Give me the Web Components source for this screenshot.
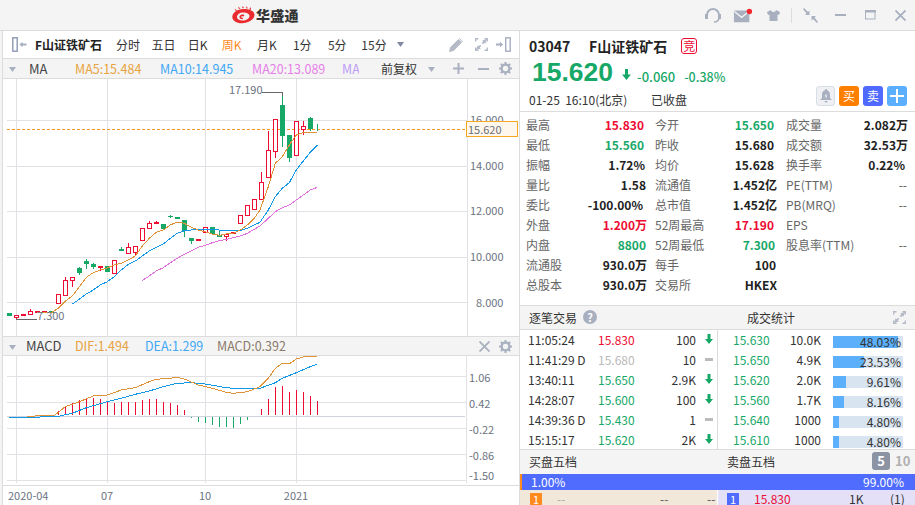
<!DOCTYPE html>
<html lang="zh"><head><meta charset="utf-8"><title>华盛通</title>
<style>
html,body{margin:0;padding:0;background:#f4f4f4;overflow:hidden}
body{width:915px;height:505px;font:12px "Noto Sans CJK SC","Liberation Sans",sans-serif;color:#333}
</style></head><body>
<hs-app>
  <hs-titlebar slot="top"></hs-titlebar>
  <div slot="left" style="display:contents"><hs-toolbar></hs-toolbar><hs-mahead></hs-mahead><hs-kline></hs-kline><hs-macdhead></hs-macdhead><hs-macd></hs-macd></div>
  <div slot="right" style="display:contents"><hs-quote></hs-quote><hs-stats></hs-stats><hs-trades></hs-trades><hs-book></hs-book></div>
</hs-app>
<script>
const FONT='"Noto Sans CJK SC","Liberation Sans",sans-serif';
const RED='#ee0c33',GREEN='#17a868',ICON='#a8b0bf';
const GEAR=(c,s)=>`<svg width="${s}" height="${s}" viewBox="0 0 14 14"><circle cx="7" cy="7" r="4.2" fill="none" stroke="${c}" stroke-width="2.6"/><g stroke="${c}" stroke-width="2.2"><path d="M7 0v2.4M7 11.6V14M0 7h2.4M11.6 7H14M2 2l1.7 1.7M10.3 10.3 12 12M12 2l-1.7 1.7M3.7 10.3 2 12"/></g></svg>`;
const EXPAND=(c)=>`<svg width="13" height="13" viewBox="0 0 13 13" fill="none" stroke="${c}" stroke-width="1.4"><path d="M.7 3.5V.7h2.8M9.5.7h2.8v2.8M12.3 9.5v2.8H9.5M3.5 12.3H.7V9.5"/><path fill="${c}" stroke="none" d="M12 1 7.2 2.6l1 1-1.5 1.5 1.2 1.2 1.5-1.5 1 1zM1 12l4.800-1.600-1-1 1.500-1.500-1.200-1.200-1.500 1.500-1-1z"/></svg>`;
const CARET=(c)=>`<svg width="7" height="5" viewBox="0 0 7 5"><path d="M0 0h7L3.500 5z" fill="${c}"/></svg>`;
const def=(n,css,html)=>customElements.define(n,class extends HTMLElement{constructor(){super();this.attachShadow({mode:'open'}).innerHTML=`<style>${css}</style>${typeof html==='function'?html():html}`}});

def('hs-app',`:host{display:flex;flex-direction:column;width:915px;height:505px;overflow:hidden;background:#f4f4f4}
.top{height:30px;flex:none;border-bottom:1px solid #dcdcdc}
.main{display:flex;height:474px;flex:none}
.left{margin-left:2px;width:516px;border-left:1px solid #dcdcdc;display:flex;flex-direction:column;background:#fff}
.right{width:395px;border-left:1px solid #dcdcdc;margin-left:0;display:flex;flex-direction:column;background:#fff;overflow:hidden}`,
`<div class="top"><slot name="top"></slot></div><div class="main"><div class="left"><slot name="left"></slot></div><div class="right"><slot name="right"></slot></div></div>`);

def('hs-titlebar',`:host{display:flex;height:30px;align-items:center;position:relative}
.logo{display:flex;align-items:center;margin-left:232px;width:70px;gap:1px}
.logo b{font-size:14px;font-weight:900;color:#333;letter-spacing:.3px;white-space:nowrap}
.ic{position:absolute;top:0;height:30px;display:flex;align-items:center;justify-content:center;width:20px}
.sep{position:absolute;left:791px;top:8px;width:1px;height:15px;background:#dcdcdc}`,
`<div class="logo"><svg width="23" height="18" viewBox="0 0 23 18"><g fill="#ea2a2e"><path d="M7 3 6 .5 8.500 2.500zM10.500 2.300 10.300 0l2 2zM14 2.200 14.800 0l.9 2.600zM17 3.300 19 1l-.2 3zM3.800 5 2.500 2.800l2.800 1.400z"/><path fill-rule="evenodd" d="M11.500 3C5 3 .3 7 .3 11c0 3.700 4.200 6.300 9.500 6.300 6.500 0 12.700-3.600 12.700-8.500C22.500 5 17.500 3 11.500 3zM11 6.500c3.800 0 6.500 1.300 6.500 3.500 0 2.600-3.400 4.500-7 4.500-3.200 0-5.500-1.400-5.500-3.400C5 8.500 7.700 6.500 11 6.500z"/><path d="M7.500 10.300c.6-1.500 3.200-2.200 5-1.300l-.9 1.400c-1.300-.4-2.400-.2-2.900.6.5.7 1.500 1 2.500.7l-.6 1.600c-1.800.2-3.600-1-3.100-3z"/></g></svg><b>华盛通</b></div>
<span class="ic" style="left:703px"><svg width="18" height="17" viewBox="0 0 18 17" fill="none" stroke="${ICON}" stroke-width="2"><path d="M3 10V8a6 6 0 0 1 12 0v2"/><path d="M15 10c0 3-2 5-5 5" stroke-width="1.500"/><rect x="1.500" y="7.500" width="2" height="4" fill="${ICON}" stroke-width="1"/><rect x="14.500" y="7.500" width="2" height="4" fill="${ICON}" stroke-width="1"/></svg></span>
<span class="ic" style="left:733px"><svg width="22" height="17" viewBox="0 0 22 17"><rect x="1" y="3" width="17" height="13" rx="1" fill="${ICON}"/><path d="M1.500 4 9.500 10.500 17.500 4" fill="none" stroke="#f4f4f4" stroke-width="1.400"/><circle cx="18" cy="4" r="3" fill="#f5282e"/></svg></span>
<span class="ic" style="left:763px"><svg width="13" height="11" viewBox="0 0 13 11"><path d="M4 0 0 2l1 3 1.500-.5V11h8V4.500L12 5l1-3-4-2a2.500 2 0 0 1-5 0z" fill="${ICON}"/></svg></span>
<span class="sep"></span>
<span class="ic" style="left:800px"><svg width="15" height="15" viewBox="0 0 15 15" fill="${ICON}"><path d="M0 1 1 0l4 4 1.500-1.500V7H2l1.500-1.500zM15 14l-1 1-4-4-1.500 1.500V8H13l-1.500 1.500z"/></svg></span>
<span class="ic" style="left:830px"><svg width="11" height="3"><rect width="11" height="2" y="0" fill="${ICON}"/></svg></span>
<span class="ic" style="left:860px"><svg width="11" height="10" fill="none"><rect x=".5" y=".5" width="9.500" height="8.500" stroke="${ICON}"/><rect x="0" y="0" width="11" height="2.500" fill="${ICON}"/></svg></span>
<span class="ic" style="left:890px"><svg width="11" height="11" stroke="${ICON}" stroke-width="1.800"><path d="m.5.500 10 10M10.500.500l-10 10"/></svg></span>`);

const TABW=[36,35,33.5,34.5,36,34.5,35.5,38];
def('hs-toolbar',`:host{display:flex;height:27px;flex:none;border-bottom:1px solid #dcdcdc;align-items:center;box-sizing:content-box;position:relative;font-size:12px;color:#333;background:#fff}
.coll{margin-left:9px;display:flex}
b{margin-left:8px;width:75px;font-size:12px;white-space:nowrap;color:#222}
i{font-style:normal;text-align:center;white-space:nowrap}
.o{color:#ff8a1e}
.r{position:absolute;top:0;height:27px;display:flex;align-items:center}`,
()=>`<span class="coll"><svg width="15" height="15" viewBox="0 0 15 15"><rect x=".8" y=".8" width="4.400" height="13.400" fill="#fff" stroke="#8d97b3" stroke-width="1.400"/><path d="M7.500 7.500 10.500 4.800V6.500h4v2h-4v1.700z" fill="#a6aebf"/></svg></span><b>F山证铁矿石</b>
${['分时','五日','日K','周K','月K','1分','5分','15分'].map((t,i)=>`<i class="${i==3?'o':''}" style="width:${TABW[i]}px">${t}</i>`).join('')}
<span class="r" style="left:394px">${CARET('#8089a0')}</span>
<span class="r" style="left:446px"><svg width="14" height="14" viewBox="0 0 14 14" fill="#b4bac6"><path d="M0 14l1-4.500L9.500 1l3.500 3.500L4.500 13zM10.500 0 14 3.500l-.5.500L10 .5z"/></svg></span>
<span class="r" style="left:472px">${EXPAND('#b4bac6')}</span>
<span class="r" style="left:493px"><svg width="15" height="15" viewBox="0 0 15 15"><path d="M0 6.500h4V4.800l3 2.700-3 2.700V8.500H0z" fill="#a6aebf"/><rect x="9.700" y=".8" width="4.500" height="13.400" fill="#fff" stroke="#a6aebf" stroke-width="1.400"/></svg></span>`);

const headCss=`:host{display:flex;height:18px;flex:none;border-bottom:1px solid #dcdcdc;background:#f4f4f4;align-items:center;position:relative;font-size:12.500px;white-space:nowrap}
.car{position:absolute;left:6px;top:8px;display:flex}
span.t{position:absolute;top:0;line-height:18px}
.i{position:absolute;display:flex;top:0;height:18px;align-items:center}`;
def('hs-mahead',headCss+`:host{height:19px}.car{top:8px}span.t{line-height:19px}.i{height:19px}`,
`<span class="car">${CARET('#a9b0bf')}</span>
<span class="t" style="left:26px;color:#444;font-size:13px">MA</span>
<span class="t" style="left:72px;color:#e8a33f">MA5:15.484</span>
<span class="t" style="left:157px;color:#42a8f5">MA10:14.945</span>
<span class="t" style="left:249px;color:#e77fe8">MA20:13.089</span>
<span class="t" style="left:339px;color:#bd9cf5;width:17px;overflow:hidden">MA30:0</span>
<span class="t" style="left:378px;color:#333;font-size:12px">前复权</span>
<span class="car" style="left:425px">${CARET('#a9b0bf')}</span>
<span class="i" style="left:450px"><svg width="11" height="11" fill="#a9b0bf"><path d="M4.500 0h2v4.500H11v2H6.500V11h-2V6.500H0v-2h4.500z"/></svg></span>
<span class="i" style="left:475px"><svg width="11" height="2"><rect width="11" height="2" fill="#a9b0bf"/></svg></span>
<span class="i" style="left:496px">${GEAR('#a9b0bf',13)}</span>`);
def('hs-macdhead',headCss+`:host{border-top:1px solid #dcdcdc}`,
`<span class="car">${CARET('#a9b0bf')}</span>
<span class="t" style="left:23px;color:#444;font-size:13px">MACD</span>
<span class="t" style="left:72px;color:#e8a33f">DIF:1.494</span>
<span class="t" style="left:142px;color:#42a8f5">DEA:1.299</span>
<span class="t" style="left:214px;color:#8a7a6a">MACD:0.392</span>
<span class="i" style="left:476px"><svg width="11" height="11" stroke="#a9b0bf" stroke-width="1.800"><path d="m.5.500 10 10M10.500.500l-10 10"/></svg></span>
<span class="i" style="left:496px">${GEAR('#a9b0bf',13)}</span>`);

const X=k=>Math.floor(9.33+7*k)+.5;
const z4=(x,y)=>[x/3,170+y/3], z5=(x,y)=>[260+x/3,90+y/3], z6=(x,y)=>[x/3,335+y/3], z7=(x,y)=>[260+x/3,335+y/3];
const pts=(a,f,b,g)=>[...a.map(p=>f(p[0],p[1])),...b.map(p=>g(p[0],p[1]))].map(p=>p[0].toFixed(1)+','+p[1].toFixed(1)).join(' ');
const C=[['g',430,437],['r',434,445,,448],['f',433,437],['r',424,436,417],['f',424,428],['f',424,428],['g',424,428],['r',373,403],['r',331,377,322],['r',322,334,,350],['g',294,308,291,314],['g',274,282,267,296],['g',282,290,279,296],['f',289,293,,302],['g',289,305],['r',271,313],['g',237,242,232],['r',232,253,220],['r',229,248,,255],['r',175,214],['r',160,178,154],['r',157,163,154],['g',163,177],['g',138,142,136,144],['g',141,146],['g',151,184,,200],['g',205,213,,221],['r',208,214],['r',172,190],['g',172,191],['g',196,200,184],['r',191,202,,212],['r',185,193],['r',136,163],['r',106,139],['r',88,121]];
const conv=y=>170+y/3;
const CP=C.map(c=>[c[0],conv(c[1]),conv(c[2]),c[3]==null?null:conv(c[3]),c[4]==null?null:conv(c[4])]);
CP.push(['r',182,200,172,null],['r',150,178,131,null],['r',119,152,null,158],['g',105,136,92,147],['g',135,158,null,162],['r',121,156,null,null],['r',126,130,121,135],['g',118,129,117,131],['w',124,131,124,131]);
function candle(c,k){const x=X(k),t=Math.round(c[1]),b=Math.round(c[2]);const col=(c[0]=='g'||c[0]=='w')?GREEN:RED;let s='';
 if(c[0]=='w')return `<path d="M${x} ${t}V${b}" stroke="${GREEN}"/>`;
 if(c[3]!=null)s+=`<path d="M${x} ${Math.round(c[3])}V${t}" stroke="${col}"/>`;
 if(c[4]!=null)s+=`<path d="M${x} ${b}V${Math.round(c[4])}" stroke="${col}"/>`;
 if(c[0]=='r')s+=`<rect x="${x-2}" y="${t+.5}" width="4" height="${b-t-1}" fill="#fff" stroke="${col}" stroke-width="1"/>`;
 else s+=`<rect x="${x-2.5}" y="${t}" width="5" height="${b-t}" fill="${col}"/>`;
 return s;}
const MA5=pts([[112,428],[154,428],[175,415],[196,393],[217,378],[238,350],[259,322],[280,308],[301,300],[322,294],[343,285],[364,280],[385,270],[406,258],[427,228],[448,205],[469,187],[490,180],[511,165],[532,156],[553,160],[574,172],[595,180],[616,185],[637,192],[658,196],[679,192],[700,190],[721,180],[742,165],[763,145],[780,120]],z4,[[25,290],[46,220],[67,200],[88,165],[109,135],[130,128],[151,129],[172,126]],z5);
const MA10=pts([[217,402],[238,388],[259,372],[280,360],[301,345],[322,335],[343,320],[364,300],[385,283],[406,273],[427,258],[448,243],[469,232],[490,222],[511,205],[532,190],[553,182],[574,180],[595,178],[616,177],[637,177],[658,180],[679,182],[700,183],[721,182],[742,175],[763,165],[780,157]],z4,[[25,360],[46,320],[67,295],[88,278],[109,240],[130,213],[151,187],[172,165]],z5);
const MA20=pts([[427,331],[448,318],[469,303],[490,293],[511,278],[532,265],[553,253],[574,243],[595,232],[616,226],[637,218],[658,212],[679,208],[700,203],[721,198],[742,190],[763,178],[780,168]],z4,[[25,385],[46,365],[67,353],[88,345],[109,330],[130,315],[151,300],[172,292]],z5);
const svgCss=`:host{display:block;flex:none}svg{display:block}text{font:11px ${FONT};fill:#6b7280}`;
def('hs-kline',svgCss+`:host{height:257px}`,()=>`<svg width="516" height="257" viewBox="3 79 516 257">
<g stroke="#e2e2e6" stroke-width="1" shape-rendering="crispEdges">
${[16,107,205,296].map(x=>`<path d="M${x+.5} 79V336"/>`).join('')}
${[120,166,211,257,302].map(y=>`<path d="M7 ${y+.5}H467"/>`).join('')}
<path d="M467.500 79V336"/></g>
<g text-anchor="start">${[[14,170],[12,215],[10,261],[8,307]].map(([v,y])=>`<text x="${v<10?476:470}" y="${y}">${v}.000</text>`).join('')}</g>
<path d="M7 129.500H466" stroke="#f39a1e" stroke-dasharray="3 2" shape-rendering="crispEdges"/>
<g shape-rendering="crispEdges">${CP.map(candle).join('')}</g>
<g fill="none" stroke-width="1" shape-rendering="crispEdges"><polyline points="${MA20}" stroke="#e070dc"/><polyline points="${MA10}" stroke="#1296e6"/><polyline points="${MA5}" stroke="#e09236"/></g>
<path d="M262 92.500H282.500V96" fill="none" stroke="#666" shape-rendering="crispEdges"/>
<text x="229" y="94">17.190</text>
<path d="M16 319.500H37" stroke="#666" shape-rendering="crispEdges"/>
<text x="37" y="320">7.300</text>
<text x="470" y="124">16.000</text>
<rect x="466.500" y="121.500" width="51" height="15" fill="#fff6ec" stroke="#f5a623"/>
<text x="468" y="133.500" style="fill:#6b6f78">15.620</text></svg>`);
const up=[[7,228],[8,213],[9,205],[10,195],[11,190],[12,190],[13,192],[14,198],[15,203],[16,201],[17,201],[18,201],[19,195],[20,192],[21,192],[22,201],[23,204],[24,210],[25,225],[36,222],[37,192],[38,156],[39,153],[40,170],[41,165],[42,171],[43,183],[44,198]];
const dn=[[26,248],[27,261],[28,264],[29,270],[30,276],[31,276],[32,279],[33,267],[34,256]];
const DIF=pts([[80,244],[130,242],[165,240],[196,215],[238,200],[280,183],[322,180],[364,165],[406,158],[448,140],[469,133],[511,130],[532,127],[553,132],[595,150],[637,160],[679,172],[700,175],[742,170],[780,155]],z6,[[25,130],[46,100],[67,85],[90,85],[109,72],[130,66],[172,64]],z7);
const DEA=pts([[28,246],[120,246],[175,244],[217,235],[259,218],[322,200],[364,190],[406,178],[448,168],[490,155],[532,145],[574,143],[616,147],[679,158],[721,162],[780,160]],z6,[[46,143],[67,130],[109,113],[151,95],[172,88]],z7);
def('hs-macd',svgCss+`:host{height:149px}`,()=>`<svg width="516" height="149" viewBox="3 356 516 149">
<g stroke="#e2e2e6" shape-rendering="crispEdges">
${[16,107,205,296].map(x=>`<path d="M${x+.5} 356V483"/>`).join('')}
${[376,402,428,454,480].map(y=>`<path d="M7 ${y+.5}H467"/>`).join('')}
<path d="M466.500 356V483"/><path d="M3 485.500H519" stroke="#dcdcdc"/></g>
<path d="M7 416.500H465" stroke="#cfd3dc" shape-rendering="crispEdges"/>
<g stroke-width="1" shape-rendering="crispEdges">
${up.map(([k,y])=>`<path d="M${X(k)} ${Math.round(335+y/3)}V415" stroke="${RED}"/>`).join('')}
${dn.map(([k,y])=>`<path d="M${X(k)} 417V${Math.round(335+y/3)}" stroke="${GREEN}"/>`).join('')}
</g>
<g fill="none" shape-rendering="crispEdges"><polyline points="${DEA}" stroke="#1296e6"/><polyline points="${DIF}" stroke="#e09236"/></g>
${[['1.06',382],['0.42',408],['-0.22',434],['-0.86',460],['-1.50',480]].map(([t,y])=>`<text x="469" y="${y}">${t}</text>`).join('')}
<text x="8" y="500">2020-04</text><text x="107" y="500" text-anchor="middle">07</text><text x="205" y="500" text-anchor="middle">10</text><text x="296" y="500" text-anchor="middle">2021</text></svg>`);

def('hs-quote',`:host{display:block;flex:none;height:80px;border-bottom:1px solid #dcdcdc;box-sizing:content-box;position:relative;background:#fff;white-space:nowrap}
.a{display:flex;align-items:center;height:30px;padding-left:9px;font-weight:700;font-size:14px;color:#222}
.a .c{width:60px}
.a em{font:12px ${FONT};font-style:normal;color:#ee0c33;border:1px solid #ee0c33;border-radius:3px;width:14px;height:14px;line-height:14px;text-align:center;margin-left:14px}
.b{display:flex;align-items:center;height:28px;color:${GREEN}}
.p{font:700 26.500px "Liberation Sans",sans-serif;margin-left:12px;line-height:28px;width:87px;position:relative;top:-3px}
.d{font-weight:500;margin-top:3px}
.e{display:flex;align-items:center;height:20px;padding-left:9px;font-size:12px;color:#333}
.btns{position:absolute;left:296px;top:55px;display:flex;gap:4px}
.btns span{width:20px;height:20px;border-radius:3px;color:#fff;font-size:12px;line-height:20px;text-align:center;display:flex;align-items:center;justify-content:center}`,
`<div class="a"><span class="c">03047</span><span>F山证铁矿石</span><em>竞</em></div>
<div class="b"><span class="p">15.620</span><svg style="margin:-1px 0 0 3px" width="9" height="11" viewBox="0 0 9 11"><path d="M3 0h3v5.500h3L4.500 11 0 5.500h3z" fill="${GREEN}"/></svg><span class="d" style="margin-left:6px;font-size:13px">-0.060</span><span class="d" style="margin-left:9px;font-size:12.500px">-0.38%</span></div>
<div class="e"><span style="width:122px">01-25&nbsp; 16:10(北京)</span><span>已收盘</span></div>
<div class="btns"><span style="background:#eef0f3;border:1px solid #d9dde4;box-sizing:border-box;width:19px"><svg width="12" height="14" viewBox="0 0 12 14"><path d="M6 0a1 1 0 0 1 1 1.200C9.300 1.700 10 3.700 10 6v3l2 2H0l2-2V6c0-2.300.7-4.300 3-4.800A1 1 0 0 1 6 0zM4.500 12h3a1.500 1.500 0 0 1-3 0z" fill="#a8b0bf"/><path d="M6.500 4 4.500 7.500H6l-.5 2.500 2-3.500H6z" fill="#eef0f3"/></svg></span><span style="background:#ff8000">买</span><span style="background:#5069ff">卖</span><span style="background:#5caeff"><svg width="14" height="14" fill="#fff"><path d="M6 0h2v6h6v2H8v6H6V8H0V6h6z"/></svg></span></div>`);

const ST=[
['最高','15.830',RED,3,'今开','15.650',GREEN,4,'成交量','2.082万','',0],
['最低','15.560',GREEN,3,'昨收','15.680','',4,'成交额','32.53万','',0],
['振幅','1.72%','',2,'均价','15.628','',4,'换手率','0.22%','',3],
['量比','1.58','',1,'流通值','1.452亿','',1,'PE(TTM)','--','#555',1],
['委比','-100.00%','',4,'总市值','1.452亿','',1,'PB(MRQ)','--','#555',1],
['外盘','1.200万',RED,0,'52周最高','17.190',RED,4,'EPS','','',0],
['内盘','8800',GREEN,1,'52周最低','7.300',GREEN,3,'股息率(TTM)','--','#555',1],
['流通股','930.0万','',0,'每手','100','',2,'','','',0],
['总股本','930.0万','',0,'交易所','HKEX','',1,'','','',0]];
def('hs-stats',`:host{display:grid;flex:none;height:194px;box-sizing:border-box;padding:3px 0 0 6px;border-bottom:1px solid #dcdcdc;background:#fff;
grid-template-columns:121px 131px 130px;grid-auto-rows:20px;font-size:12px;white-space:nowrap}
.c{display:flex;justify-content:space-between;align-items:center;line-height:20px}
.c span{color:#666}.c b{color:#222;font-weight:700}`,
()=>ST.map(r=>[0,4,8].map(o=>`<div class="c" style="padding-left:${o?8:0}px"><span>${r[o]}</span><b style="color:${r[o+2]||'#222'};font-weight:${r[o+2]=='#555'?400:700};padding-right:${r[o+3]}px">${r[o+1]}</b></div>`).join('')).join(''));

const arrow=`<svg width="8" height="10" viewBox="0 0 8 10"><path d="M2.500 0h3v5H8L4 10 0 5h2.500z" fill="${GREEN}"/></svg>`;
const flat=`<svg width="8" height="3"><rect width="8" height="3" fill="#bbb"/></svg>`;
const T=[['11:05:24','15.830',RED,'100',1,'15.630','10.0K','48.03%',65],['11:41:29 D','15.680','#b9b9b9','10',0,'15.650','4.9K','23.53%',31],['13:40:11','15.650',GREEN,'2.9K',1,'15.620','2.0K','9.61%',13],['14:28:07','15.600',GREEN,'100',1,'15.560','1.7K','8.16%',11],['14:39:36 D','15.430',GREEN,'1',0,'15.640','1000','4.80%',6],['15:15:17','15.620',GREEN,'2K',1,'15.610','1000','4.80%',6]];
def('hs-trades',`:host{display:block;flex:none;background:#fff;font-size:12px;white-space:nowrap}
.h{display:flex;align-items:center;height:23px;box-sizing:border-box;padding-bottom:1px;background:#f4f4f4;box-sizing:content-box;height:22px;border-bottom:1px solid #dcdcdc;padding-left:9px;position:relative;color:#333}
.q{width:14px;height:14px;border-radius:50%;background:#a8b0bf;color:#fff;font-size:11px;font-weight:700;line-height:14px;text-align:center;margin-left:6px}
.body{display:flex;height:119px;border-bottom:1px solid #dcdcdc;box-sizing:content-box}
.l{width:197px;border-right:1px solid #dcdcdc;flex:none}.rr{flex:1}
.row{display:flex;align-items:center;height:20px;box-sizing:border-box;padding-bottom:2px}
.l .t{width:70px;margin-left:8px;color:#333}.l .p{width:50px}.l .v{width:48px;text-align:right;color:#333}.l .a{margin-left:9px;display:flex}
.rr .p{width:36px;margin-left:15px;color:${GREEN}}.rr .v{width:52px;text-align:right;color:#333}
.bar{margin-left:12px;width:70px;height:12px;background:#d8e4ef;position:relative;margin-top:6px}
.bar u{display:block;height:12px;background:#5cb0fb}
.bar s{position:absolute;right:2px;top:-4px;line-height:20px;text-decoration:none;color:#333}`,
()=>`<div class="h"><span>逐笔交易</span><span class="q">?</span><span style="position:absolute;left:227px">成交统计</span><span style="position:absolute;left:373px;top:5px;display:flex">${EXPAND('#b4bac6')}</span></div>
<div class="body"><div class="l">${T.map(r=>`<div class="row"><span class="t">${r[0]}</span><span class="p" style="color:${r[2]}">${r[1]}</span><span class="v">${r[3]}</span><span class="a">${r[4]?arrow:flat}</span></div>`).join('')}</div>
<div class="rr">${T.map(r=>`<div class="row"><span class="p">${r[5]}</span><span class="v">${r[6]}</span><span class="bar"><u style="width:${r[8]}px"></u><s>${r[7]}</s></span></div>`).join('')}</div></div>`);

def('hs-book',`:host{display:block;flex:1;font-size:12px;white-space:nowrap;background:#fff}
.h{height:22px;padding-bottom:2px;background:#f4f4f4;display:flex;align-items:center;padding-left:9px;position:relative;color:#333}
.abs{position:absolute}
.five{left:352px;top:2px;width:18px;height:18px;background:#8c94a4;color:#fff;border-radius:3px;font-weight:700;font-size:13px;line-height:18px;text-align:center}
.ten{left:375px;top:2px;font-weight:700;font-size:13px;line-height:18px;color:#b0b0b0}
.bar{height:16px;background:#4f6cff;color:#fff;display:flex;justify-content:space-between;align-items:center;padding:0 11px 0 9px;border-left:2px solid #ff8a1e;line-height:16px}
.rows{display:flex;height:15px;overflow:hidden}
.lf{width:197px;background:#f2e8d9;position:relative;flex:none}.rt{flex:1;margin-left:1px;background:#e3e0f8;position:relative}
.n{position:absolute;left:10px;top:3px;width:12px;height:12px;color:#fff;font-size:11px;line-height:12px;text-align:center}
.s{position:absolute;top:-1px;line-height:20px}`,
`<div class="h"><span>买盘五档</span><span class="abs" style="left:207px">卖盘五档</span><span class="abs five">5</span><span class="abs ten">10</span></div>
<div class="bar"><span>1.00%</span><span>99.00%</span></div>
<div class="rows"><div class="lf"><span class="n" style="background:#ff8a1e">1</span><span class="s" style="left:37px;color:#aaa">--</span><span class="s" style="left:140px;color:#555">--</span><span class="s" style="left:187px;color:#555">--</span></div>
<div class="rt"><span class="n" style="left:9px;background:#4f6cff">1</span><span class="s" style="left:36px;color:${RED}">15.830</span><span class="s" style="left:131px;color:#333">1K</span><span class="s" style="left:172px;color:#333">(1)</span></div></div>`);
</script></body></html>
